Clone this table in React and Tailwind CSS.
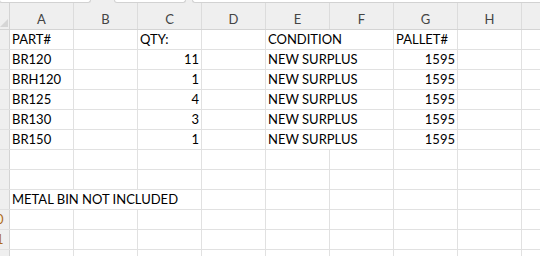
import React from "react";

const COLS = ["A", "B", "C", "D", "E", "F", "G", "H", ""];

// each row: list of cells { span, text, right }
const ROWS = [
  [{ text: "PART#" }, {}, { text: "QTY:" }, {}, { text: "CONDITION", span: 2 }, { text: "PALLET#" }, {}, {}],
  [{ text: "BR120" }, {}, { text: "11", right: true }, {}, { text: "NEW SURPLUS", span: 2 }, { text: "1595", right: true }, {}, {}],
  [{ text: "BRH120" }, {}, { text: "1", right: true }, {}, { text: "NEW SURPLUS", span: 2 }, { text: "1595", right: true }, {}, {}],
  [{ text: "BR125" }, {}, { text: "4", right: true }, {}, { text: "NEW SURPLUS", span: 2 }, { text: "1595", right: true }, {}, {}],
  [{ text: "BR130" }, {}, { text: "3", right: true }, {}, { text: "NEW SURPLUS", span: 2 }, { text: "1595", right: true }, {}, {}],
  [{ text: "BR150" }, {}, { text: "1", right: true }, {}, { text: "NEW SURPLUS", span: 2 }, { text: "1595", right: true }, {}, {}],
  [{}, {}, {}, {}, {}, {}, {}, {}, {}],
  [{}, {}, {}, {}, {}, {}, {}, {}, {}],
  [{ text: "METAL BIN NOT INCLUDED", span: 3 }, {}, {}, {}, {}, {}, {}],
  [{}, {}, {}, {}, {}, {}, {}, {}, {}],
  [{}, {}, {}, {}, {}, {}, {}, {}, {}],
  [{}, {}, {}, {}, {}, {}, {}, {}, {}],
];

const WIDTHS = { 1: "w-[64px]", 2: "w-[128px]", 3: "w-[192px]" };

function Cell({ cell }) {
  const span = cell.span || 1;
  return (
    <div
      className={`${WIDTHS[span]} shrink-0 h-full border-r border-[#e1e1e1] flex items-end pb-[1px] whitespace-nowrap ${
        cell.right ? "justify-end pr-[2px]" : "pl-[2px]"
      }`}
    >
      {cell.text && <span className="leading-[18px] text-[13px] text-black">{cell.text}</span>}
    </div>
  );
}

export default function App() {
  return (
    <div
      className="w-[540px] h-[256px] overflow-hidden bg-white"
      style={{ fontFamily: "Lato, 'Open Sans', sans-serif" }}
    >
      {/* bottom edge of name box / formula bar */}
      <div className="flex h-[3px] bg-[#efefef]">
        <div className="w-[92px] shrink-0 bg-white border-b border-x border-[#d2d2d2] rounded-b-[3px] -ml-[1px]" />
        <div className="w-[72px] shrink-0 ml-[23px] bg-white border-b border-x border-[#d2d2d2] rounded-b-[3px]" />
        <div className="flex-1 ml-[6px] bg-white border-b border-l border-[#d2d2d2] rounded-bl-[3px]" />
      </div>

      {/* column headers */}
      <div className="flex h-[27px] bg-[#efefef] border-b border-[#d4d4d4]">
        <div className="w-[10px] shrink-0 h-full border-r border-[#d4d4d4] relative">
          <svg className="absolute right-[1px] bottom-[2px]" width="8" height="8" viewBox="0 0 8 8">
            <polygon points="8,0 8,8 0,8" fill="#d6d6d6" />
          </svg>
        </div>
        {COLS.map((c, k) => (
          <div
            key={k}
            className="w-[64px] shrink-0 h-full border-r border-[#dcdcdc] flex items-center justify-center pt-[8px] text-[13px] text-[#444]"
          >
            {c}
          </div>
        ))}
      </div>

      {/* rows */}
      {ROWS.map((row, i) => (
        <div key={i} className="flex h-[20px] border-b border-[#e1e1e1]">
          <div className="w-[10px] shrink-0 h-full bg-[#efefef] border-r border-[#d4d4d4] overflow-hidden">
            {(i === 9 || i === 10) && (
              <div className="w-[30px] -ml-[19px] h-full flex items-end justify-center pb-[1px] text-[13px] leading-[18px] text-[#b06a18]">
                {i + 1}
              </div>
            )}
          </div>
          {row.map((cell, j) => (
            <Cell key={j} cell={cell} />
          ))}
        </div>
      ))}
    </div>
  );
}
